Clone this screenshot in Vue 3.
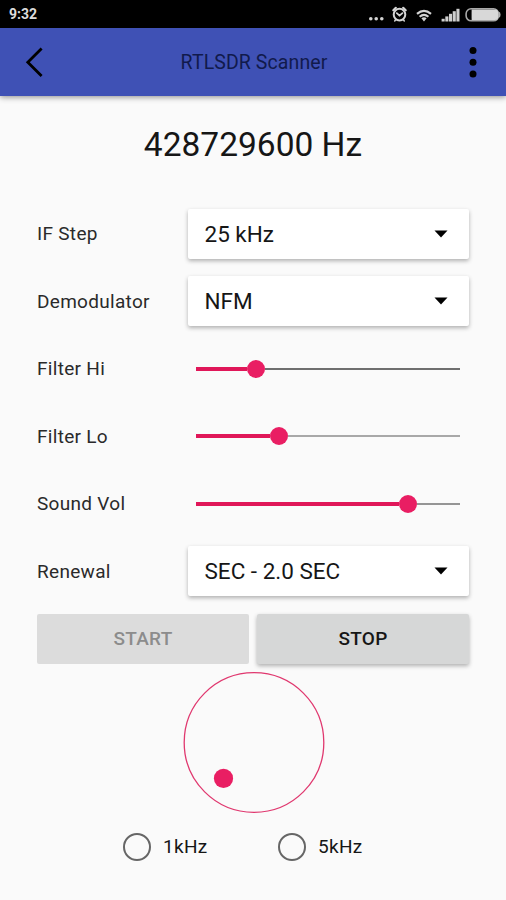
<template>
  <div class="screen">
    <div class="status">
      <span class="clock">9:32</span>
      <svg class="status-icons" width="136" height="28" viewBox="0 0 136 28">
        <g fill="#d4d4d4">
          <circle cx="1.8" cy="18.7" r="1.8" />
          <circle cx="7.2" cy="18.7" r="1.8" />
          <circle cx="12.8" cy="18.7" r="1.8" />
        </g>
        <g fill="none" stroke="#d4d4d4" stroke-linecap="round">
          <circle cx="30.5" cy="14.6" r="5.8" stroke-width="2" />
          <path d="M24.3 10.2 L26.8 7.8 M36.7 10.2 L34.2 7.8" stroke-width="2.2" />
          <path d="M27.8 13.1 L30.5 15.6 L33.4 13.1" stroke-width="1.8" />
          <path d="M26.8 19.6 L25.7 21 M34.2 19.6 L35.3 21" stroke-width="1.5" />
        </g>
        <g fill="none" stroke="#d4d4d4">
          <path d="M48 13.9 Q55 7.8 62 13.9" stroke-width="2.1" />
          <path d="M50.6 16.8 Q55 12.8 59.4 16.8" stroke-width="2.1" />
        </g>
        <path d="M52.4 18.2 Q55 16.2 57.6 18.2 L55 21.5 Z" fill="#d4d4d4" />
        <g fill="#cfcfcf">
          <rect x="72.6" y="18.8" width="3.1" height="2.7" />
          <rect x="76.3" y="16.4" width="3.1" height="5.1" />
          <rect x="80" y="13.8" width="3.1" height="7.7" />
          <rect x="83.7" y="11.2" width="3.1" height="10.3" />
          <rect x="87.4" y="8.8" width="3.1" height="12.7" />
        </g>
        <rect x="97.1" y="8.8" width="32.4" height="12" rx="5" fill="none" stroke="#a8a8a8" stroke-width="1.6" />
        <path d="M102.600 9.500 H126 Q129 9.500 129 12 V17.600 Q129 20.100 126 20.100 H102.600 Z" fill="#d8d8d8" />
        <path d="M129.500 11.500 Q131.600 12 131.600 14.700 Q131.600 17.400 129.500 18 Z" fill="#b0b0b0" />
      </svg>
    </div>

    <header class="bar">
      <svg class="back" width="20" height="32" viewBox="0 0 20 32">
        <path d="M17.600 2.500 L3.800 16.300 L17.600 30.100" fill="none" stroke="#000" stroke-width="2.800" />
      </svg>
      <h1>RTLSDR Scanner</h1>
      <svg class="more" width="8" height="32" viewBox="0 0 8 32">
        <circle v-for="cy in [4.4, 16.2, 28]" :key="cy" cx="4" :cy="cy" r="3.5" />
      </svg>
    </header>

    <main>
      <div class="frequency"><span>428729600 Hz</span></div>

      <div v-for="row in rows" :key="row.label" class="row">
        <span class="label">{{ row.label }}</span>
        <div v-if="row.value" class="select">
          <span>{{ row.value }}</span>
          <svg width="14" height="8" viewBox="0 0 14 8"><path d="M0.500 0.500 H13.500 L7 7.500 Z" /></svg>
        </div>
        <div v-else class="slider">
          <div class="fill" :style="{ width: row.level + 'px' }"></div>
          <div class="thumb"></div>
          <div class="rest" :style="{ background: row.track }"></div>
        </div>
      </div>

      <div class="buttons">
        <button class="start" disabled>START</button>
        <button class="stop">STOP</button>
      </div>

      <svg class="dial" width="142" height="142" viewBox="0 0 142 142">
        <circle cx="71" cy="70.500" r="69.800" fill="none" stroke="#e0386f" stroke-width="1.300" />
        <circle cx="40.500" cy="106.400" r="9.600" fill="#e91e63" />
      </svg>

      <div class="steps">
        <label v-for="step in steps" :key="step" class="step">
          <i class="ring"></i>
          <span>{{ step }}</span>
        </label>
      </div>
    </main>
  </div>
</template>

<script setup>
const rows = [
  { label: 'IF Step', value: '25 kHz' },
  { label: 'Demodulator', value: 'NFM' },
  // level is the filled part of the track, left of the thumb
  { label: 'Filter Hi', level: 51, track: '#6f6f6f' },
  { label: 'Filter Lo', level: 74, track: '#a8a8a8' },
  { label: 'Sound Vol', level: 203, track: '#959595' },
  { label: 'Renewal', value: 'SEC - 2.0 SEC' }
]

const steps = ['1kHz', '5kHz']
</script>

<style>
body {
  background: #fafafa;
}
</style>

<style scoped>
.screen {
  height: 900px;
  background: #fafafa;
  font-family: Roboto, sans-serif;
  color: #161616;
  overflow: hidden;
}

.status {
  height: 28px;
  background: #000;
  display: flex;
  justify-content: space-between;
  padding: 0 1px 0 9px;
}

.clock {
  color: #dcdcdc;
  font-size: 14px;
  font-weight: 700;
  line-height: 29px;
}

.bar {
  height: 67.5px;
  box-sizing: border-box;
  background: #3f51b5;
  box-shadow: 0 1px 6px rgba(0, 0, 0, 0.45);
  display: flex;
  align-items: center;
  justify-content: space-between;
  padding: 1px 29px 0 24px;
}

h1 {
  margin: 0 0 0 -5px;
  font-size: 19.5px;
  font-weight: 400;
  letter-spacing: 0.1px;
  color: #111a4c;
}

main {
  display: flex;
  flex-direction: column;
  padding: 0 37px;
}

.frequency {
  height: 104.5px;
  box-sizing: border-box;
  padding-top: 29px;
  text-align: center;
  font-size: 33.5px;
  line-height: 40px;
}

.row {
  height: 67.5px;
  display: flex;
  align-items: center;
}

.label {
  width: 150.5px;
  font-size: 19px;
  letter-spacing: 0.3px;
  color: #2a2a2a;
}

.select {
  width: 281.5px;
  height: 50px;
  box-sizing: border-box;
  padding: 0 21px 0 17px;
  display: flex;
  align-items: center;
  justify-content: space-between;
  background: #fff;
  border-radius: 2px;
  box-shadow: 0 2px 4px rgba(0, 0, 0, 0.3);
  font-size: 22.5px;
}

.slider {
  width: 264px;
  margin-left: 8.5px;
  display: flex;
  align-items: center;
}

.fill {
  height: 4px;
  background: #e01759;
}

.thumb {
  width: 18px;
  height: 18px;
  border-radius: 50%;
  background: #e91e63;
}

.rest {
  flex: 1;
  height: 2px;
}

.buttons {
  display: flex;
  gap: 8px;
  margin-top: 8.5px;
}

button {
  height: 50px;
  flex: 1;
  padding: 0;
  border: 0;
  border-radius: 2px;
  font-family: inherit;
  font-size: 19px;
  font-weight: 500;
  letter-spacing: 0.3px;
}

.start {
  background: #dcdcdc;
  color: #8c8c8c;
}

.stop {
  background: #d6d7d7;
  color: #161616;
  box-shadow: 0 2px 4px rgba(0, 0, 0, 0.3);
}

.dial {
  margin: 8px 0 0 145.5px;
}

.steps {
  display: flex;
  margin: 19px 0 0 86px;
}

.step {
  width: 155px;
  display: flex;
  align-items: center;
  font-size: 19px;
  letter-spacing: 0.3px;
}

.ring {
  width: 28px;
  height: 28px;
  box-sizing: border-box;
  border: 2.5px solid #666;
  border-radius: 50%;
  margin-right: 12px;
}
</style>
